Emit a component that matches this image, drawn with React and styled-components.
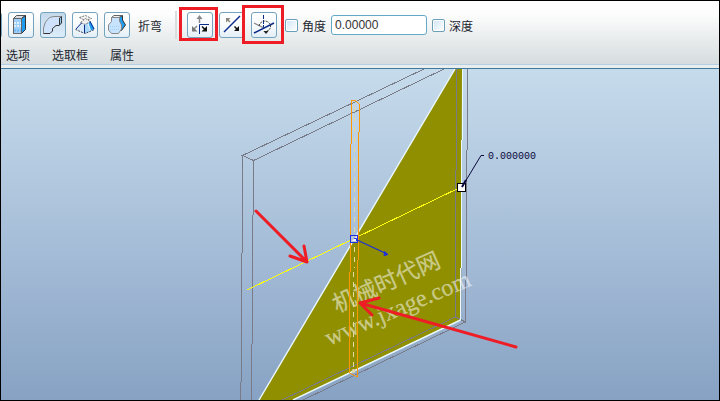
import React, { useState } from 'react';
import styled, { createGlobalStyle } from 'styled-components';

const NAVY = '#0a2a8c';

const SolidIcon = () => (
  <svg viewBox="0 0 26 26">
    <path d="M5.5 6.5 L8.5 3.5 H17.5 L13.5 6.5 Z" fill="#d9dde2" stroke="#555" />
    <path d="M13.5 6.5 L17.5 3.5 V17.5 L13.5 21.5 Z" fill="#1e9cf0" stroke="#333" />
    <rect x="5.5" y="6.5" width="8" height="15" fill="#9fd0fb" stroke="#666" />
    <path d="M6 11 H13 M6 14 H13" stroke="#dcf0ff" strokeWidth="2" strokeDasharray="2 1" />
    <path d="M6 18.5 H13" stroke="#6fb8f4" strokeWidth="2" strokeDasharray="2 1" />
  </svg>
);

const BendIcon = () => (
  <svg viewBox="0 0 26 26">
    <path d="M3.5 21.5 V16 L5.5 10 L9.5 5.5 L14 4.5 H21.5 V11 L19 13.5 H16.5 L12.5 16.5 V19 L10 21.5 Z" fill="#cfe2fc" />
    <path d="M19.5 6 L21.5 4.5 V11 L19.5 13 Z" fill="#8ec9f4" stroke="#333" />
    <path d="M3.5 21.5 V16 L5.5 10 L9.5 5.5 L14 4.5 H21" fill="none" stroke="#888" />
    <path d="M3.5 21.5 H10 L12.5 19 V16.5 L16 13.5 H19.5" fill="none" stroke="#333" />
  </svg>
);

const BlendIcon = () => (
  <svg viewBox="0 0 26 26">
    <path d="M10 9 L3.5 17.5 L13 21.5 L22.5 17.5 L18 9 Z" fill="#dcebfb" />
    <path d="M12 12 L15 11 L18 19.5 L13 21.5 Z" fill="#a8d8fa" />
    <path d="M16 9 L18.5 9 L22.5 17 L19 18.5 Z" fill="#1e9cf0" />
    <path d="M7.5 5.5 L13.5 3.5 L19.5 6.5 L13 8.5 Z" fill="#f2f2f2" stroke="#777" strokeDasharray="2 1" />
    <path d="M8.5 10.5 L13.5 6.5 L18.5 9.5 L13 12.5 Z" fill="#eee" stroke="#777" strokeDasharray="2 1" />
    <path d="M9.5 11 L4 17 M12.5 13 V21 M18 9.5 L22 17" fill="none" stroke={NAVY} />
    <path d="M3.5 17.5 L13 21.5 L22.5 17.5" fill="none" stroke="#445" strokeDasharray="2 1" />
  </svg>
);

const RevolveIcon = () => (
  <svg viewBox="0 0 26 26">
    <path d="M15 5.5 L18.5 3.5 V8 L21.5 13 L17.5 18.5 L15 14 Z" fill="#1e9cf0" stroke="#333" />
    <path d="M7.5 5.5 L10 3.5 H18 L15 5.5 Z" fill="#f4f4f4" stroke="#666" />
    <path d="M7.5 5.5 H15.5 V9 L17.5 13 V17 L14.5 21.5 H7.5 L4.5 18 V13 L7.5 9.5 Z" fill="#c8e3fd" stroke="#888" />
    <path d="M6 14.5 H16 M6 17.5 H16" stroke="#9fd0f8" strokeDasharray="1 1" />
  </svg>
);

const BendSideIcon = () => (
  <svg viewBox="0 0 26 26">
    <path d="M12.5 5 V11" stroke="#888" strokeWidth="1.5" />
    <path d="M9.5 7 L12.5 3 L15.5 7 Z" fill="#888" />
    <path d="M10 14 L7 17" stroke="#888" strokeWidth="1.5" />
    <path d="M5 14 V19.5 H10.5 Z" fill="#777" />
    <path d="M22 12.5 H12.5 V22" fill="none" stroke={NAVY} />
    <path d="M15 14.5 L18 17.5" stroke="#111" strokeWidth="1.5" />
    <path d="M20 14 V19.5 H14.5 Z" fill="#111" />
  </svg>
);

const FlipIcon = () => (
  <svg viewBox="0 0 26 26">
    <path d="M5 20 L21 4" stroke={NAVY} strokeWidth="1.4" />
    <path d="M7 6 H11.5 L7 10.5 Z" fill="#8a8578" />
    <path d="M8 7 L11 10" stroke="#8a8578" strokeWidth="1.5" />
    <path d="M20 14 V19 H15 Z" fill="#111" />
    <path d="M15.5 14.5 L18 17" stroke="#111" strokeWidth="1.5" />
  </svg>
);

const AxisIcon = () => (
  <svg viewBox="0 0 26 26">
    <path d="M12.5 3 V16" stroke={NAVY} strokeDasharray="4 1" />
    <path d="M3 11 L13 16" stroke="#888" strokeWidth="1.3" />
    <path d="M3 21 L23 11" stroke={NAVY} strokeWidth="1.4" />
    <path d="M8 14 A6 6 0 0 1 19.5 13 Q20 18 15 19.5" fill="none" stroke="#333" strokeDasharray="2 1" />
    <path d="M12.5 19 H17.5 L15 22 Z" fill="#222" />
  </svg>
);

const shapeTools = [
  { name: '薄板', icon: null },
  { name: '拉伸', icon: <SolidIcon /> },
  { name: '弯曲', icon: <BendIcon />, active: true },
  { name: '混合', icon: <BlendIcon /> },
  { name: '旋转', icon: <RevolveIcon /> },
];

const bendTools = [
  { name: '折弯侧', icon: <BendSideIcon />, mark: '-5px -5px -3px -8px' },
  { name: '反向', icon: <FlipIcon /> },
  { name: '折弯轴', icon: <AxisIcon />, mark: '-7px -7px -6px -9px' },
];

const tabs = ['选项', '选取框', '属性'];

const Model = () => (
  <Drawing viewBox="1 69 718 331" preserveAspectRatio="xMinYMin slice">
    <polygon points="455,69 462,69 461,320 293,400 259,400" fill="#8f8f00" />

    {/* plate edges */}
    <g fill="none" stroke="#797c88">
      <path d="M242.5 155 V253 M241.5 253 V382 M240.5 382 V400" />
      <path d="M253.5 160 V215 M252.5 215 V344 M251.5 344 V400" />
      <path d="M456.5 69 V170 M455.5 170 V317" />
      <path d="M467.5 69 V150 M466.5 150 V280 M465.5 280 V322" />
      <g shapeRendering="crispEdges">
        <path d="M424 69 L242.5 155.5 L253.5 160.5 L444 69" />
        <path d="M282 400 L455.5 317 L465.5 322 L303 400" />
      </g>
    </g>
    <g fill="none" stroke="#ebf8ff" strokeWidth="1.4">
      <path d="M455 69 L259 400" />
      <path d="M462.5 69 V140 M461.5 140 V268 M460.5 268 V320" strokeWidth="1" />
      <path d="M460.5 320 L293 400" />
    </g>

    {/* watermark */}
    <g fill="#fff" fillOpacity="0.5" stroke="#fff" strokeOpacity="0.25" strokeWidth="0.5">
      <WatermarkTitle transform="translate(337 313) rotate(-24)">机械时代网</WatermarkTitle>
      <WatermarkUrl transform="translate(329 346) rotate(-23)">www.jxage.com</WatermarkUrl>
    </g>

    {/* bend line and its axis */}
    <path d="M247 290 L461 187" stroke="#ffff10" shapeRendering="crispEdges" />
    <path d="M354.5 107 V268 M353.5 272 V370" fill="none" stroke="#e6d9a0" strokeDasharray="5 5" />
    <g fill="none" stroke="#ff9800">
      <path d="M351.5 100 V144 M350.5 144 V272 M349.5 272 V373" />
      <path d="M359.5 104 V132 M358.5 132 V260 M357.5 260 V377" />
      <path d="M351 100.5 H355 L359.5 104 M349.5 373 L357.5 377" />
    </g>
    <circle cx="353.5" cy="371" r="2" fill="#ddd6ae" />

    <rect x="350.5" y="235.5" width="7" height="7" fill="#b9c4cf" stroke="#1c2ee0" />
    <path d="M352 241 L357 236 V241 Z" fill="#fff" />
    <path d="M354 238.5 H356.5 V241" fill="none" stroke="#1c2ee0" />
    <path d="M357 240 L385 253" stroke="#1c2ee0" strokeWidth="1.2" />
    <path d="M384.5 251.5 L388 254.5 L384 255.5 Z" fill="#1c2ee0" stroke="#1c2ee0" />

    <rect x="457.5" y="183.5" width="8" height="8" fill="#fff" stroke="#000" />
    <path d="M462 187 L481 155.5 H484" fill="none" stroke="#08083c" />
    <path d="M462 187 L466 180" stroke="#08083c" strokeWidth="2" />
    <Dimension x="488" y="159">0.000000</Dimension>

    {/* callout arrows */}
    <g fill="none" stroke="#ee1c25" strokeWidth="3" strokeLinecap="round" strokeLinejoin="round">
      <path d="M256 211 L307 262 M304 246 L307 262 L290 256" />
      <path d="M516 347 L360 303 M379 298 L360 303 L372 315" />
    </g>
  </Drawing>
);

const App = () => {
  const [angleOn, setAngleOn] = useState(false);
  const [depthOn, setDepthOn] = useState(false);
  const [angle, setAngle] = useState('0.00000');

  return (
    <Window>
      <GlobalStyle />
      <Dashboard>
        <Toolbar>
          {shapeTools.map((tool) => (
            <ToolButton key={tool.name} aria-label={tool.name} $active={tool.active}>
              {tool.icon}
            </ToolButton>
          ))}
          <ToolTitle>折弯</ToolTitle>
          <Separator />
          {bendTools.map((tool) => (
            <ToolButton key={tool.name} aria-label={tool.name} $mark={tool.mark}>
              {tool.icon}
            </ToolButton>
          ))}
          <Option>
            <Check type="checkbox" checked={angleOn} onChange={(e) => setAngleOn(e.target.checked)} />
            <span id="angle-label">角度</span>
          </Option>
          <ValueInput aria-labelledby="angle-label" value={angle} onChange={(e) => setAngle(e.target.value)} />
          <Option>
            <Check type="checkbox" checked={depthOn} onChange={(e) => setDepthOn(e.target.checked)} />
            <span>深度</span>
          </Option>
        </Toolbar>
        <TabRow>
          {tabs.map((tab) => (
            <Tab key={tab}>{tab}</Tab>
          ))}
        </TabRow>
      </Dashboard>
      <Divider />
      <Viewport>
        <Model />
      </Viewport>
    </Window>
  );
};

export default App;

const GlobalStyle = createGlobalStyle`
  * {
    box-sizing: border-box;
  }
  body {
    margin: 0;
    font-family: "Liberation Sans", "Noto Sans CJK SC", sans-serif;
    font-size: 12px;
    color: #1c2630;
  }
  button, input {
    font: inherit;
    color: inherit;
  }
`;

const Window = styled.div`
  display: flex;
  flex-direction: column;
  height: 100vh;
  border: 1px solid #000;
  overflow: hidden;
`;

const Dashboard = styled.header`
  flex: none;
  padding-top: 11px;
  background: linear-gradient(#ffffff 0%, #fdfdfd 20%, #e4e8e9 70%, #d6dddf 100%);
`;

const Toolbar = styled.div`
  display: flex;
  align-items: center;
  gap: 6px;
  margin-left: -25px;
`;

const ToolButton = styled.button`
  position: relative;
  flex: none;
  width: 26px;
  height: 26px;
  padding: 0;
  border: 1px solid #73a3bd;
  border-radius: 3px;
  background: ${({ $active }) =>
    $active ? 'linear-gradient(#c3d9ea, #dcecfa)' : 'linear-gradient(#ffffff, #f6f9fb 60%, #e2eef6)'};

  svg {
    display: block;
    width: 26px;
    height: 26px;
    margin: -1px;
  }

  &::after {
    content: '';
    display: ${({ $mark }) => ($mark ? 'block' : 'none')};
    position: absolute;
    z-index: 1;
    inset: ${({ $mark }) => $mark};
    margin: -1px;
    border: 3px solid #ee1c25;
  }
`;

const ToolTitle = styled.span`
  flex: none;
  margin: 0 7px 0 2px;
`;

const Separator = styled.span`
  flex: none;
  width: 2px;
  height: 28px;
  margin: -1px 4px -1px 0;
  background: #dadddf;
`;

const Option = styled.label`
  flex: none;
  display: flex;
  align-items: center;
  gap: 4px;
  margin-left: 2px;

  & + input {
    margin-left: -1px;
  }

  input + & {
    margin-left: -1px;
  }
`;

const Check = styled.input`
  appearance: none;
  width: 13px;
  height: 13px;
  margin: 0;
  border: 1px solid #6a9fb9;
  border-radius: 2px;
  background: linear-gradient(135deg, #cfe5f6, #ffffff);
  box-shadow: inset 0 0 0 1px #fff;

  &:checked {
    background: #4b93bd;
  }
`;

const ValueInput = styled.input`
  flex: none;
  width: 96px;
  height: 20px;
  padding: 0 3px;
  border: 1px solid #63a9c8;
  border-radius: 3px;
  background: #fff;
  color: #333;
`;

const TabRow = styled.nav`
  display: flex;
  gap: 22px;
  padding: 10px 5px 0;
`;

const Tab = styled.button`
  height: 16px;
  padding: 0;
  border: 0;
  background: none;
  line-height: 16px;
`;

const Divider = styled.div`
  flex: none;
  height: 5px;
  border-top: 1px solid #b4cfe3;
  border-bottom: 1px solid #417a9f;
  background: #e9eded;
`;

const Viewport = styled.main`
  flex: 1;
  min-height: 0;
  overflow: hidden;
  background: linear-gradient(#c6dbeb, #a8bfd9 50%, #87a2c3);
`;

const Drawing = styled.svg`
  display: block;
  width: 100%;
  height: 100%;
`;

const Dimension = styled.text`
  font-family: "Liberation Mono", monospace;
  font-size: 10px;
  fill: #08083c;
`;

const WatermarkTitle = styled.text`
  font-family: "Noto Sans CJK SC", sans-serif;
  font-size: 23px;
`;

const WatermarkUrl = styled.text`
  font-family: "Liberation Serif", serif;
  font-size: 24px;
`;
